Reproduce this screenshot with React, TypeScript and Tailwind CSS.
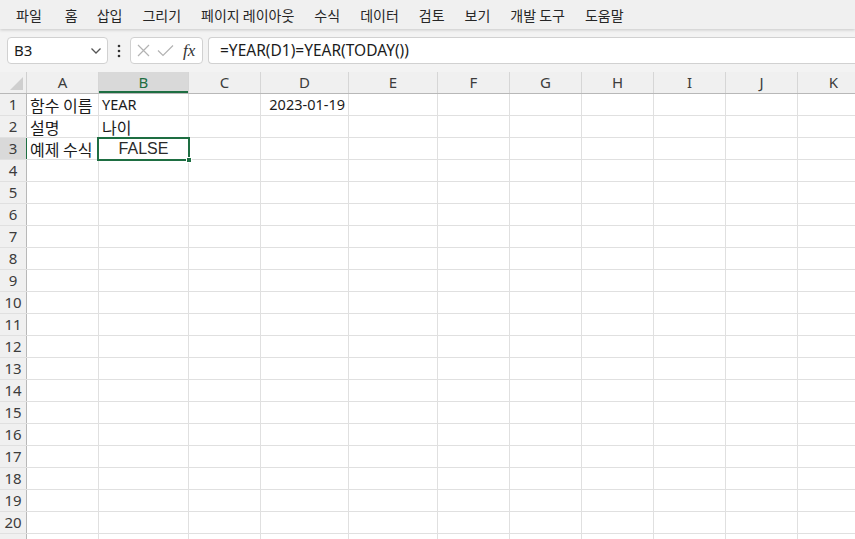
import React from "react";

const menus = ["파일", "홈", "삽입", "그리기", "페이지 레이아웃", "수식", "데이터", "검토", "보기", "개발 도구", "도움말"];
const cols: { l: string; w: string }[] = [
  { l: "A", w: "w-[72px]" },
  { l: "B", w: "w-[90px]" },
  { l: "C", w: "w-[72px]" },
  { l: "D", w: "w-[88px]" },
  { l: "E", w: "w-[89px]" },
  { l: "F", w: "w-[72px]" },
  { l: "G", w: "w-[72px]" },
  { l: "H", w: "w-[72px]" },
  { l: "I", w: "w-[72px]" },
  { l: "J", w: "w-[72px]" },
  { l: "K", w: "w-[72px]" },
];

const ko = "text-[16px] font-['Noto_Sans_CJK_KR',sans-serif]";
const cellData: Record<string, { t: string; cls?: string }> = {
  "1-0": { t: "함수 이름", cls: ko },
  "1-1": { t: "YEAR" },
  "1-3": { t: "2023-01-19", cls: "justify-end pr-[3px]" },
  "2-0": { t: "설명", cls: ko },
  "2-1": { t: "나이", cls: ko },
  "3-0": { t: "예제 수식", cls: ko },
};

const font = "font-['Noto_Sans','Noto_Sans_CJK_KR',sans-serif]";

export default function App() {
  const rows = Array.from({ length: 21 }, (_, i) => i + 1);
  return (
    <div className={`w-[855px] h-[539px] overflow-hidden bg-white ${font} text-[#1b1b1b]`}>
      {/* Menu bar */}
      <div className="relative z-10 h-[29px] bg-[#f0f0f0] flex items-center pl-[16px] gap-[20px] text-[14px] text-[#262626] shadow-[0_1px_3px_rgba(0,0,0,0.18)] font-['Noto_Sans_CJK_KR',sans-serif]">
        {menus.map((m) => (
          <span key={m} className={m === "홈" ? "ml-[3px] -mr-[1px] leading-none" : "leading-none"}>
            {m}
          </span>
        ))}
      </div>
      {/* Formula bar */}
      <div className="bg-[#f3f3f3] pt-[8px] pb-[8px]">
        <div className="flex items-center h-[27px]">
          <div className="ml-[7px] w-[101px] h-[27px] bg-white border border-[#d1d1d1] rounded-[4px] flex items-center justify-between pl-[6px] pr-[5px] text-[15px]">
            <span className="leading-none">B3</span>
            <svg width="12" height="8" viewBox="0 0 12 8">
              <path d="M1.5 1.5 L6 6 L10.5 1.5" fill="none" stroke="#555" strokeWidth="1.3" />
            </svg>
          </div>
          <div className="w-[22px] flex justify-center">
            <svg width="4" height="14" viewBox="0 0 4 14">
              <circle cx="2" cy="2" r="1.3" fill="#333" />
              <circle cx="2" cy="7" r="1.3" fill="#333" />
              <circle cx="2" cy="12" r="1.3" fill="#333" />
            </svg>
          </div>
          <div className="w-[73px] h-[27px] bg-white border border-[#d1d1d1] rounded-[4px] flex items-center pl-[6px] gap-[7px]">
            <svg width="13" height="13" viewBox="0 0 13 13">
              <path d="M1 1 L12 12 M12 1 L1 12" stroke="#b3b3b3" strokeWidth="1.2" fill="none" />
            </svg>
            <svg width="17" height="13" viewBox="0 0 17 13">
              <path d="M1 6.5 L6 11.5 L16 1.5" stroke="#b3b3b3" strokeWidth="1.2" fill="none" />
            </svg>
            <span className="font-['Liberation_Serif',serif] italic text-[17px] leading-none text-[#333] ml-[2px]">fx</span>
          </div>
          <div className="ml-[5px] flex-1 h-[27px] bg-white border border-[#d1d1d1] rounded-l-[4px] border-r-0 flex items-center pl-[11px] text-[15.5px]">
            <span className="leading-none">=YEAR(D1)=YEAR(TODAY())</span>
          </div>
        </div>
      </div>
      {/* Grid */}
      <div className="bg-[#f3f3f3]">
        <div className="flex h-[22px] border-b border-[#b8b8b8] bg-[#f0f0f0] text-[15px] text-[#3c3c3c]">
          <div className="w-[27px] shrink-0 border-r border-[#d0d0d0] relative">
            <svg className="absolute left-[10px] top-[5px]" width="13" height="13" viewBox="0 0 13 13">
              <path d="M13 0 L13 13 L0 13 Z" fill="#cfcfcf" />
            </svg>
          </div>
          {cols.map((c) => (
            <div
              key={c.l}
              className={`${c.w} shrink-0 border-r border-[#d6d6d6] flex items-center justify-center leading-none ${
                c.l === "B" ? "bg-[#d9d9d9] text-[#1e6e42] shadow-[inset_0_-2px_0_#1e6e42]" : ""
              }`}
            >
              {c.l}
            </div>
          ))}
        </div>
      </div>
      <div className="relative">
        {rows.map((r) => (
          <div key={r} className="flex h-[22px] border-b border-[#e0e0e0]">
            <div
              className={`w-[27px] shrink-0 border-r flex items-center justify-center text-[15px] leading-none text-[#3c3c3c] ${
                r === 3 ? "bg-[#d9d9d9] border-[#1e6e42] text-[#1e6e42]" : "bg-[#f0f0f0] border-[#b8b8b8]"
              }`}
            >
              {r <= 20 ? r : ""}
            </div>
            {cols.map((c, ci) => {
              const d = cellData[`${r}-${ci}`];
              return (
                <div
                  key={c.l}
                  className={`${c.w} shrink-0 border-r border-[#e0e0e0] flex items-center pl-[3px] text-[14.5px] leading-none whitespace-nowrap overflow-visible ${d?.cls ?? ""}`}
                >
                  {d?.t}
                </div>
              );
            })}
          </div>
        ))}
        {/* Selection B3 */}
        <div className="absolute left-[97px] top-[43px] w-[93px] h-[24px] border-2 border-[#1e6e42] flex items-center justify-center">
          <span className="font-['Liberation_Sans',sans-serif] text-[16px] leading-none text-[#2a2a2a]">FALSE</span>
          <div className="absolute -right-[4px] -bottom-[4px] w-[6px] h-[6px] bg-[#1e6e42] border border-white" />
        </div>
      </div>
    </div>
  );
}
